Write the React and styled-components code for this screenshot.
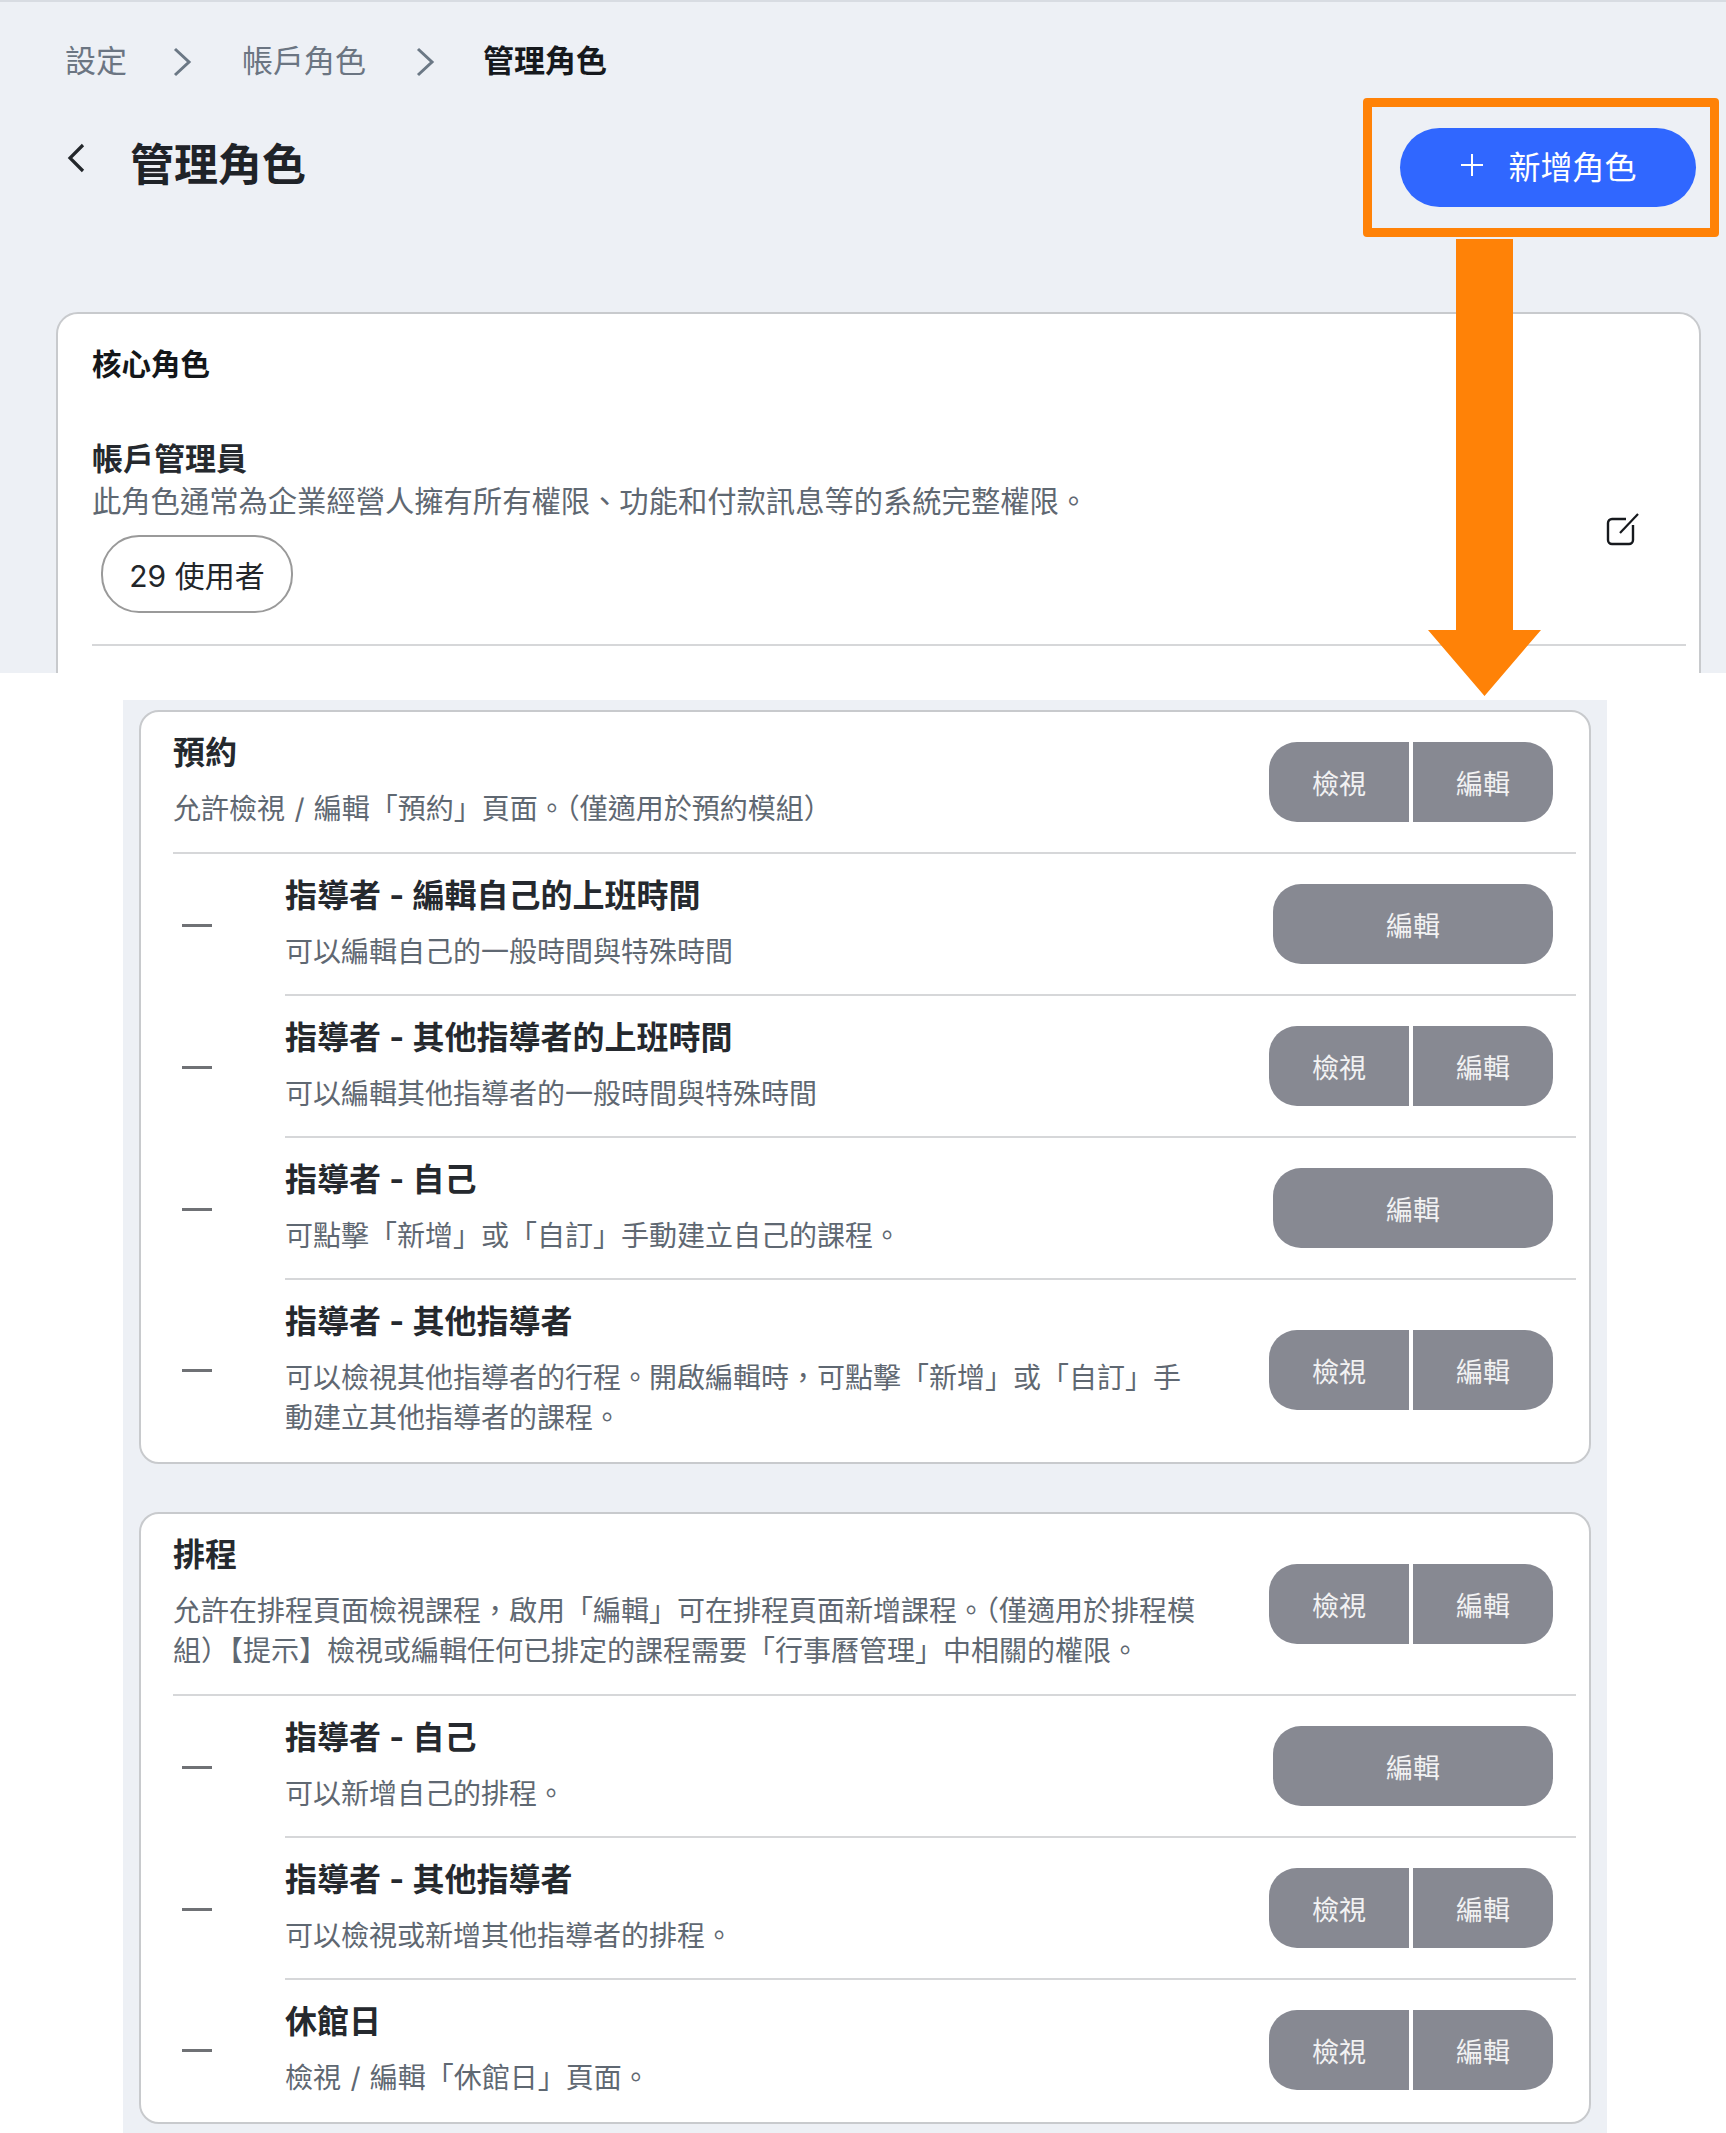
import React from "react";
import styled, { createGlobalStyle } from "styled-components";

const GlobalStyle = createGlobalStyle`
  html, body {
    margin: 0;
    padding: 0;
    background: #fff;
    font-family: Inter, "Noto Sans CJK TC", "Noto Sans", sans-serif;
  }
  * { box-sizing: border-box; }
`;

const Page = styled.div`
  position: relative;
  width: 1726px;
  height: 2133px;
  overflow: hidden;
  background: #fff;
`;

const TopPanel = styled.section`
  height: 673px;
  overflow: hidden;
  background: #edf0f5;
  border-top: 2px solid #d8dce2;
`;

const Breadcrumb = styled.nav`
  display: flex;
  align-items: center;
  height: 44px;
  margin: 37px 0 0 65px;
  font-size: 31px;
  line-height: 44px;
  color: #6b7582;
`;

const Crumb = styled.span`
  color: ${(p) => (p.$active ? "#16191d" : "#6b7582")};
  font-weight: ${(p) => (p.$active ? 700 : 400)};
`;

const CrumbArrow = styled.svg`
  width: 20px;
  height: 30px;
  margin: 2px ${(p) => p.$right}px 0 ${(p) => p.$left}px;
  flex: none;
`;

const HeadRow = styled.header`
  display: flex;
  align-items: center;
  justify-content: space-between;
  height: 79px;
  margin-top: 45px;
  padding: 0 30px 0 67px;
`;

const TitleGroup = styled.div`
  display: flex;
  align-items: center;
  gap: 45px;
  margin-top: -6px;
`;

const BackIcon = styled.svg`
  width: 18px;
  height: 30px;
  flex: none;
  margin-bottom: 14px;
`;

const PageTitle = styled.h1`
  margin: 0;
  font-size: 44px;
  line-height: 60px;
  font-weight: 700;
  color: #1f2328;
`;

const AddButton = styled.button`
  display: flex;
  align-items: center;
  justify-content: center;
  gap: 25px;
  width: 296px;
  height: 79px;
  padding: 0 0 5px 2px;
  border: 0;
  border-radius: 40px;
  background: #3067ff;
  color: #fff;
  font: inherit;
  font-size: 32px;
`;

const TopCard = styled.div`
  margin: 105px 25px 0 56px;
  padding-top: 30px;
  height: 420px;
  background: #fff;
  border: 2px solid #c8cacd;
  border-radius: 22px;
`;

const SectionLabel = styled.h2`
  margin: 0 0 55px 34px;
  font-size: 29.5px;
  line-height: 40px;
  font-weight: 700;
  color: #14171a;
`;

const RoleRow = styled.div`
  display: flex;
  align-items: center;
  justify-content: space-between;
  margin: 0 13px 0 34px;
  padding: 0 46px 31px 0;
  border-bottom: 2px solid #d6d7d9;
`;

const RoleName = styled.div`
  font-size: 31px;
  line-height: 40px;
  font-weight: 700;
  color: #25292e;
`;

const RoleDesc = styled.div`
  margin-top: 3px;
  font-size: 29.3px;
  line-height: 40px;
  color: #5f6872;
`;

const UserPill = styled.div`
  display: inline-flex;
  align-items: center;
  justify-content: center;
  width: 192px;
  height: 78px;
  margin: 13px 0 0 9px;
  border: 2px solid #9a9a9a;
  border-radius: 38px;
  font-size: 30px;
  color: #22262a;
`;

const EditIcon = styled.svg`
  width: 34px;
  height: 34px;
  flex: none;
  margin-top: 6px;
`;

const BottomPanel = styled.section`
  width: 1484px;
  height: 1433px;
  margin: 27px 0 0 123px;
  padding: 10px 16px 0 16px;
  background: #edf0f5;
  display: flex;
  flex-direction: column;
  gap: 48px;
`;

const Card = styled.article`
  padding-bottom: 2px;
  background: #fff;
  border: 2px solid #c8cacd;
  border-radius: 20px;
`;

const CardHeader = styled.div`
  display: flex;
  align-items: center;
  justify-content: space-between;
  margin: 0 13px 0 32px;
  padding: 21px 23px 23px 0;
  border-bottom: 2px solid #d6d7d9;
`;

const HeaderText = styled.div`
  max-width: 1040px;
`;

const CardTitle = styled.h3`
  margin: 0 0 16px;
  font-size: 32px;
  line-height: 40px;
  font-weight: 700;
  color: #25292e;
`;

const Desc = styled.p`
  margin: 0;
  font-size: 28px;
  line-height: 40px;
  word-spacing: 1.5px;
  color: #5f6872;
`;

const Row = styled.div`
  display: flex;
  align-items: stretch;
`;

const DashCell = styled.div`
  display: flex;
  align-items: center;
  width: 144px;
  padding: 0 0 0 41px;
  flex: none;
`;

const Dash = styled.span`
  display: block;
  width: 30px;
  height: 3px;
  background: #6f7175;
`;

const RowBody = styled.div`
  flex: 1;
  display: flex;
  align-items: center;
  justify-content: space-between;
  margin-right: 13px;
  padding: 22px 23px 22px 0;
  border-bottom: ${(p) => (p.$last ? "0" : "2px solid #d6d7d9")};
`;

const RowText = styled.div`
  max-width: 910px;
`;

const RowTitle = styled.h4`
  margin: 0 0 16px;
  font-size: 32px;
  line-height: 40px;
  font-weight: 700;
  word-spacing: 0.7px;
  color: #25292e;
`;

const ToggleGroup = styled.div`
  display: flex;
  gap: 4px;
  flex: none;
  margin-top: ${(p) => (p.$header ? "2px" : "0")};
`;

const Toggle = styled.button`
  width: ${(p) => (p.$wide ? "280px" : "140px")};
  height: 80px;
  padding: 0;
  border: 0;
  border-radius: ${(p) =>
    p.$wide ? "28px" : p.$side === "left" ? "28px 0 0 28px" : "0 28px 28px 0"};
  background: #878992;
  color: #f2f2f3;
  font: inherit;
  font-size: 27px;
`;

const HighlightBox = styled.div`
  position: absolute;
  left: 1363px;
  top: 98px;
  width: 356px;
  height: 139px;
  border: 9px solid #ff8207;
  border-radius: 4px;
`;

const ArrowShape = styled.svg`
  position: absolute;
  left: 1428px;
  top: 239px;
  width: 113px;
  height: 457px;
`;

const Toggles = ({ edit, header }) =>
  edit ? (
    <ToggleGroup $header={header}>
      <Toggle $wide>編輯</Toggle>
    </ToggleGroup>
  ) : (
    <ToggleGroup $header={header}>
      <Toggle $side="left">檢視</Toggle>
      <Toggle $side="right">編輯</Toggle>
    </ToggleGroup>
  );

const sections = [
  {
    title: "預約",
    desc: "允許檢視 / 編輯「預約」頁面。（僅適用於預約模組）",
    rows: [
      { title: "指導者 - 編輯自己的上班時間", desc: "可以編輯自己的一般時間與特殊時間", edit: true },
      { title: "指導者 - 其他指導者的上班時間", desc: "可以編輯其他指導者的一般時間與特殊時間" },
      { title: "指導者 - 自己", desc: "可點擊「新增」或「自訂」手動建立自己的課程。", edit: true },
      {
        title: "指導者 - 其他指導者",
        desc: "可以檢視其他指導者的行程。開啟編輯時，可點擊「新增」或「自訂」手動建立其他指導者的課程。",
      },
    ],
  },
  {
    title: "排程",
    desc: "允許在排程頁面檢視課程，啟用「編輯」可在排程頁面新增課程。（僅適用於排程模組）【提示】檢視或編輯任何已排定的課程需要「行事曆管理」中相關的權限。",
    rows: [
      { title: "指導者 - 自己", desc: "可以新增自己的排程。", edit: true },
      { title: "指導者 - 其他指導者", desc: "可以檢視或新增其他指導者的排程。" },
      { title: "休館日", desc: "檢視 / 編輯「休館日」頁面。" },
    ],
  },
];

const Chevron = ({ left, right }) => (
  <CrumbArrow $left={left} $right={right} viewBox="0 0 20 30" fill="none">
    <path d="M3 2 L17 15 L3 28" stroke="#6b7885" strokeWidth="3" />
  </CrumbArrow>
);

export default function App() {
  return (
    <Page>
      <GlobalStyle />
      <TopPanel>
        <Breadcrumb>
          <Crumb>設定</Crumb>
          <Chevron left={45} right={50} />
          <Crumb>帳戶角色</Crumb>
          <Chevron left={49} right={48} />
          <Crumb $active>管理角色</Crumb>
        </Breadcrumb>
        <HeadRow>
          <TitleGroup>
            <BackIcon viewBox="0 0 18 30" fill="none">
              <path d="M16 2 L3 15 L16 28" stroke="#23272b" strokeWidth="3.2" />
            </BackIcon>
            <PageTitle>管理角色</PageTitle>
          </TitleGroup>
          <AddButton>
            <svg width="22" height="22" viewBox="0 0 22 22" fill="none">
              <path d="M11 0 V22 M0 11 H22" stroke="#fff" strokeWidth="2" />
            </svg>
            新增角色
          </AddButton>
        </HeadRow>
        <TopCard>
          <SectionLabel>核心角色</SectionLabel>
          <RoleRow>
            <div>
              <RoleName>帳戶管理員</RoleName>
              <RoleDesc>此角色通常為企業經營人擁有所有權限、功能和付款訊息等的系統完整權限。</RoleDesc>
              <UserPill>29 使用者</UserPill>
            </div>
            <EditIcon viewBox="0 0 34 34" fill="none">
              <path
                d="M20 7 H6 a4 4 0 0 0 -4 4 V28 a4 4 0 0 0 4 4 H23 a4 4 0 0 0 4 -4 V13"
                stroke="#16191d"
                strokeWidth="2.4"
              />
              <path d="M14 21 L32 2" stroke="#16191d" strokeWidth="2.2" />
            </EditIcon>
          </RoleRow>
        </TopCard>
      </TopPanel>

      <BottomPanel>
        {sections.map((section) => (
          <Card key={section.title}>
            <CardHeader>
              <HeaderText>
                <CardTitle>{section.title}</CardTitle>
                <Desc>{section.desc}</Desc>
              </HeaderText>
              <Toggles header />
            </CardHeader>
            {section.rows.map((row, i) => (
              <Row key={row.title}>
                <DashCell>
                  <Dash />
                </DashCell>
                <RowBody $last={i === section.rows.length - 1}>
                  <RowText>
                    <RowTitle>{row.title}</RowTitle>
                    <Desc>{row.desc}</Desc>
                  </RowText>
                  <Toggles edit={row.edit} />
                </RowBody>
              </Row>
            ))}
          </Card>
        ))}
      </BottomPanel>

      <HighlightBox />
      <ArrowShape viewBox="0 0 113 457">
        <polygon points="28,0 85,0 85,391 113,391 56.5,457 0,391 28,391" fill="#ff8207" />
      </ArrowShape>
    </Page>
  );
}
